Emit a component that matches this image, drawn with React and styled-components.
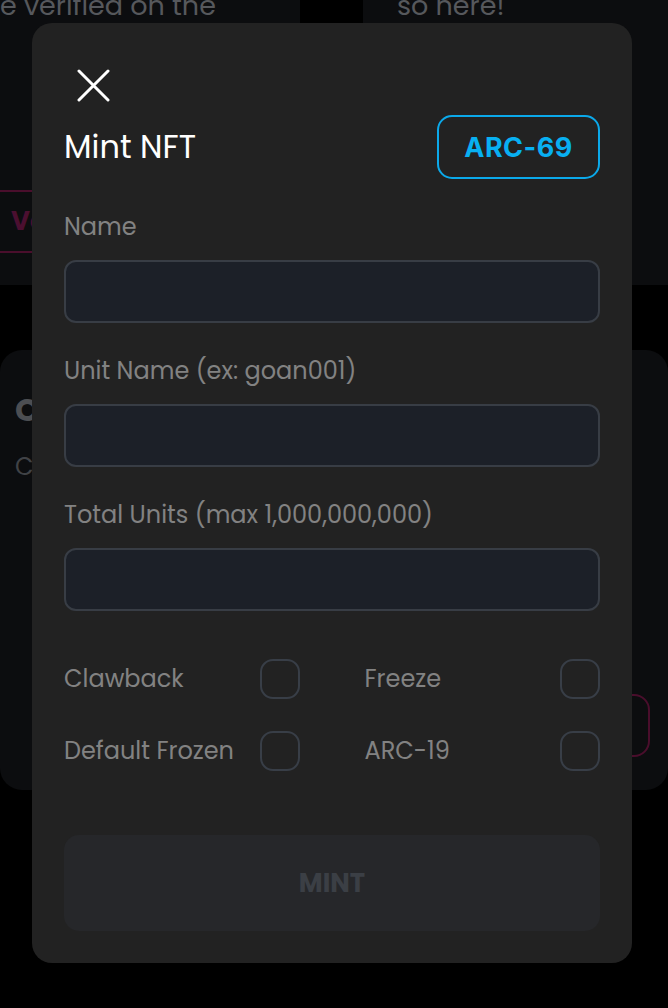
import React from "react";
import styled, { createGlobalStyle } from "styled-components";

const GlobalStyle = createGlobalStyle`
  html, body {
    margin: 0;
    padding: 0;
    background: #000;
    overflow: hidden;
  }
  body {
    font-family: "Poppins", "Inter", "Liberation Sans", sans-serif;
  }
`;

const Screen = styled.div`
  position: relative;
  width: 668px;
  height: 1008px;
  overflow: hidden;
  background: #000;
`;

// page underneath the modal, scrolled so the top cards are cut off
const Scrolled = styled.div`
  margin-top: -12px;
  display: flex;
  flex-direction: column;
  gap: 65px;
`;

const TopRow = styled.div`
  display: flex;
  gap: 63px;
  height: 297px;
`;

const TopCard = styled.div`
  background: #0c0d0f;
  flex: ${(p) => (p.$wide ? "1" : "0 0 300px")};
  padding-left: ${(p) => p.$pad}px;
  display: flex;
  flex-direction: column;
  overflow: hidden;
`;

const DimText = styled.div`
  font-size: 27px;
  line-height: 36px;
  color: #56585c;
  white-space: nowrap;
`;

const GhostButton = styled.div`
  margin-top: ${(p) => p.$top || 0}px;
  margin-left: ${(p) => p.$left || 0}px;
  align-self: ${(p) => p.$align || "flex-start"};
  width: ${(p) => p.$w}px;
  height: 63px;
  box-sizing: border-box;
  border: 2px solid #4a0e2c;
  border-radius: 16px;
  display: flex;
  align-items: center;
  padding-left: 49px;
  font-size: 26px;
  font-weight: 700;
  color: #4b0f30;
`;

const LowerCard = styled.div`
  background: #0c0d0f;
  border-radius: 22px;
  height: 440px;
  padding: 40px 18px 0 15px;
  box-sizing: border-box;
  display: flex;
  flex-direction: column;
`;

const DimHeading = styled.div`
  font-size: 32px;
  line-height: 40px;
  font-weight: 700;
  color: #4c4e52;
`;

const DimSub = styled.div`
  margin-top: 22px;
  font-size: 24px;
  line-height: 30px;
  color: #404246;
`;

// modal
const Modal = styled.div`
  position: absolute;
  left: 32px;
  top: 23px;
  width: 600px;
  height: 940px;
  box-sizing: border-box;
  background: #222222;
  border-radius: 20px;
  padding: 46px 32px 32px;
  display: flex;
  flex-direction: column;
`;

const CloseButton = styled.button`
  width: 33px;
  height: 33px;
  margin-left: 13px;
  padding: 0;
  border: none;
  background: none;
  display: flex;
`;

const TitleRow = styled.div`
  margin-top: 13px;
  display: flex;
  align-items: center;
  justify-content: space-between;
`;

const Title = styled.h2`
  margin: 0;
  font-size: 32px;
  font-weight: 400;
  color: #ffffff;
`;

const StandardButton = styled.button`
  width: 163px;
  height: 64px;
  box-sizing: border-box;
  border: 2px solid #0ba9ea;
  border-radius: 15px;
  background: transparent;
  color: #08b0f2;
  font-family: "Inter", "Liberation Sans", sans-serif;
  font-size: 27px;
  font-weight: 700;
  letter-spacing: 0.5px;
`;

const Field = styled.div`
  margin-top: 33px;
  display: flex;
  flex-direction: column;
  gap: 18px;
`;

const Label = styled.label`
  font-size: 24px;
  line-height: 30px;
  color: #828282;
  white-space: nowrap;
`;

const Input = styled.input`
  height: 63px;
  box-sizing: border-box;
  background: #1c2028;
  border: 2px solid #383d45;
  border-radius: 12px;
  outline: none;
`;

const CheckGrid = styled.div`
  margin-top: 48px;
  display: grid;
  grid-template-columns: 1fr 1fr;
  column-gap: 65px;
  row-gap: 32px;
`;

const CheckItem = styled.div`
  display: flex;
  align-items: center;
  justify-content: space-between;
`;

const Box = styled.span`
  width: 40px;
  height: 40px;
  box-sizing: border-box;
  border: 2px solid #383e47;
  border-radius: 13px;
`;

const MintButton = styled.button`
  margin-top: 64px;
  height: 96px;
  border: none;
  border-radius: 15px;
  background: #26272a;
  color: #3b3f45;
  font-family: inherit;
  font-size: 26px;
  font-weight: 700;
`;

const fields = [
  "Name",
  "Unit Name (ex: goan001)",
  "Total Units (max 1,000,000,000)",
];

const options = ["Clawback", "Freeze", "Default Frozen", "ARC-19"];

export default function App() {
  return (
    <Screen>
      <GlobalStyle />
      <Scrolled>
        <TopRow>
          <TopCard $pad={0}>
            <DimText>e verified on the</DimText>
            <GhostButton $top={166} $left={-40} $w={300}>
              Ve
            </GhostButton>
          </TopCard>
          <TopCard $wide $pad={34}>
            <DimText>so here!</DimText>
          </TopCard>
        </TopRow>
        <LowerCard>
          <DimHeading>C</DimHeading>
          <DimSub>C</DimSub>
          <GhostButton $top={212} $align="flex-end" $w={200} />
        </LowerCard>
      </Scrolled>

      <Modal>
        <CloseButton aria-label="close">
          <svg width="33" height="33" viewBox="0 0 33 33">
            <path
              d="M2 2 L31 31 M31 2 L2 31"
              stroke="#fff"
              strokeWidth="3"
              strokeLinecap="round"
            />
          </svg>
        </CloseButton>
        <TitleRow>
          <Title>Mint NFT</Title>
          <StandardButton>ARC-69</StandardButton>
        </TitleRow>
        {fields.map((f) => (
          <Field key={f}>
            <Label>{f}</Label>
            <Input />
          </Field>
        ))}
        <CheckGrid>
          {options.map((o) => (
            <CheckItem key={o}>
              <Label>{o}</Label>
              <Box />
            </CheckItem>
          ))}
        </CheckGrid>
        <MintButton>MINT</MintButton>
      </Modal>
    </Screen>
  );
}
